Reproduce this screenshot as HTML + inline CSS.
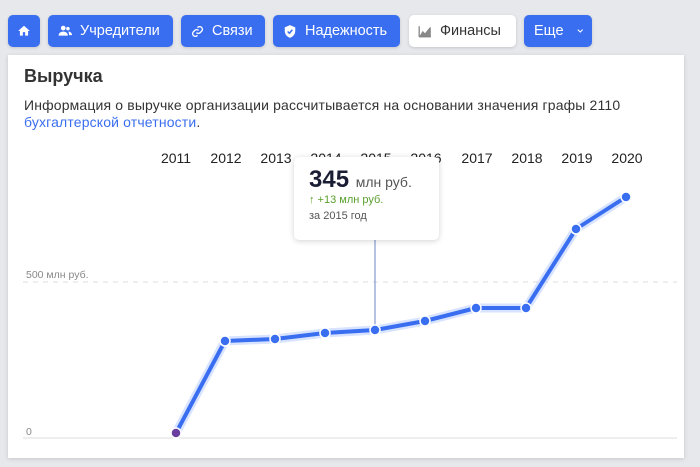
<!DOCTYPE html>
<html><head><meta charset="utf-8"><style>
body{margin:0;width:700px;height:467px;background:#e6e8ec;font-family:"Liberation Sans",sans-serif;position:relative;overflow:hidden}
.b{position:absolute;top:15px;height:32px;border-radius:5px;background:#3a6ef0;color:#fff;font-size:14.5px;display:flex;align-items:center;box-shadow:0 1px 3px rgba(0,0,0,.15)}
.b svg{margin-right:8px}
.card{position:absolute;left:8px;top:55px;width:676px;height:403px;background:#fff;box-shadow:0 1px 4px rgba(0,0,0,.15)}
.t{position:absolute;font-size:13px}
</style></head><body>
<div class="b" style="left:8px;width:32px;justify-content:center"><svg width="14" height="14" viewBox="0 0 24 24" style="margin:0"><path d="M10 20v-6h4v6h5v-8h3L12 3 2 12h3v8z" fill="#fff"/></svg></div>
<div class="b" style="left:48px;width:125px;padding-left:10px;box-sizing:border-box"><svg width="14" height="12" viewBox="0 0 24 20"><circle cx="9" cy="5" r="4" fill="#fff"/><circle cx="17" cy="6" r="3" fill="#fff"/><path d="M1 18c0-5 4-7 8-7s8 2 8 7zM18 11c3 0 6 2 6 6h-5c0-3-1-5-1-6z" fill="#fff"/></svg>Учредители</div>
<div class="b" style="left:181px;width:84px;padding-left:10px;box-sizing:border-box"><svg width="13" height="13" viewBox="0 0 24 24" fill="none" stroke="#fff" stroke-width="2.5"><path d="M10 14a5 5 0 0 0 7 0l3-3a5 5 0 0 0-7-7l-1 1M14 10a5 5 0 0 0-7 0l-3 3a5 5 0 0 0 7 7l1-1"/></svg>Связи</div>
<div class="b" style="left:273px;width:127px;padding-left:10px;box-sizing:border-box"><svg width="14" height="15" viewBox="0 0 24 24"><path d="M12 1 3 5v6c0 6 4 10 9 12 5-2 9-6 9-12V5z" fill="#fff"/><path d="M8 12l3 3 5-6" stroke="#3a6ef0" stroke-width="2.5" fill="none"/></svg>Надежность</div>
<div class="b" style="left:409px;width:107px;padding-left:9px;box-sizing:border-box;background:#fff;color:#333"><svg width="14" height="13" viewBox="0 0 24 22"><path d="M2 20V2M2 20h20" stroke="#777" stroke-width="2" fill="none"/><path d="M2 20 L8 10 L12 14 L20 4 L22 4 V20z" fill="#888"/></svg>Финансы</div>
<div class="b" style="left:524px;width:68px;padding-left:10px;box-sizing:border-box">Еще<svg width="12" height="12" viewBox="0 0 24 24" style="margin-left:12px"><path d="M5 8l7 7 7-7" stroke="#fff" stroke-width="3" fill="none"/></svg></div>
<div class="card"></div>
<div class="t" style="left:24px;top:66px;font-size:18px;font-weight:bold;color:#333">Выручка</div>
<div class="t" style="left:24px;top:97px;color:#333;line-height:17px;width:660px;font-size:14px;letter-spacing:0.15px">Информация о выручке организации рассчитывается на основании значения графы 2110<br><span style="color:#3a6ef0">бухгалтерской отчетности</span>.</div>
<svg style="position:absolute;left:0;top:0" width="700" height="467">
<g font-family="Liberation Sans" font-size="14" fill="#222" text-anchor="middle">
<text x="176" y="163">2011</text><text x="226" y="163">2012</text><text x="276" y="163">2013</text><text x="326" y="163">2014</text><text x="376" y="163">2015</text><text x="426" y="163">2016</text><text x="477" y="163">2017</text><text x="527" y="163">2018</text><text x="577" y="163">2019</text><text x="627" y="163">2020</text></g>
<text x="26" y="278" font-size="10.5" fill="#888" font-family="Liberation Sans">500 млн руб.</text>
<text x="26" y="435" font-size="10.5" fill="#888" font-family="Liberation Sans">0</text>
<line x1="23" y1="282" x2="677" y2="282" stroke="#ddd" stroke-dasharray="5 5"/>
<line x1="23" y1="438" x2="677" y2="438" stroke="#ddd"/>
<line x1="375" y1="240" x2="375" y2="330" stroke="#6b86c8"/>
<polyline points="176,433 225,341 275,339 325,333 375,330 425,321 476,308 526,308 576,229 626,197" fill="none" stroke="#bcd0ff" stroke-width="9" stroke-linejoin="round" opacity=".6"/>
<polyline points="176,433 225,341 275,339 325,333 375,330 425,321 476,308 526,308 576,229 626,197" fill="none" stroke="#3a6ef0" stroke-width="4" stroke-linejoin="round"/>
<g fill="#3a6ef0" stroke="#fff" stroke-width="1.5">
<circle cx="176" cy="433" r="5" fill="#6a3fa0"/><circle cx="225" cy="341" r="5"/><circle cx="275" cy="339" r="5"/><circle cx="325" cy="333" r="5"/><circle cx="375" cy="330" r="5"/><circle cx="425" cy="321" r="5"/><circle cx="476" cy="308" r="5"/><circle cx="526" cy="308" r="5"/><circle cx="576" cy="229" r="5"/><circle cx="626" cy="197" r="5"/></g>
</svg>
<div style="position:absolute;left:294px;top:157px;width:145px;height:83px;background:#fff;border-radius:5px;box-shadow:0 1px 6px rgba(0,0,0,.18)">
<div style="position:absolute;left:15px;top:9px;font-size:24px;font-weight:bold;color:#1a1d33">345 <span style="font-size:14px;font-weight:normal;color:#555">млн руб.</span></div>
<div style="position:absolute;left:15px;top:37px;font-size:11px;color:#5aa02c">↑ +13 млн руб.</div>
<div style="position:absolute;left:15px;top:53px;font-size:11px;color:#555">за 2015 год</div>
</div>
</body></html>
